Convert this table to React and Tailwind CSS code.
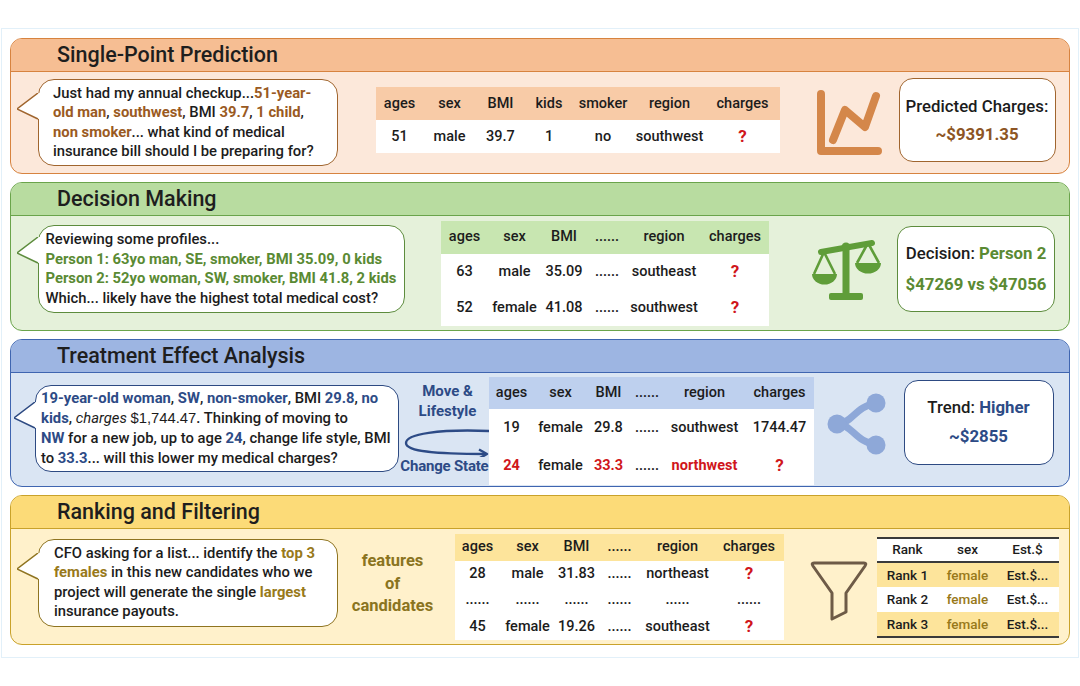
const Q = () => <span className="text-[#d0161b] font-bold text-[17px]">?</span>

function Tail({ pos, stroke }) {
  return (
    <svg className={`absolute left-[-22px] ${pos}`} width="25" height="28" viewBox="0 0 25 28">
      <polygon points="21,0 0,16 21,26 25,26 25,0" fill="#fff" />
      <polyline points="21,0 0,16 21,26" fill="none" stroke={stroke} strokeWidth="1.5" strokeLinejoin="round" />
    </svg>
  )
}

function Bubble({ className, stroke, tail, children }) {
  return (
    <div className={`relative shrink-0 bg-white rounded-[16px] border-[1.5px] flex flex-col justify-center text-[14.8px] font-medium leading-[19.5px] text-[#1c1c1c] whitespace-nowrap ${className}`}>
      <Tail pos={tail} stroke={stroke} />
      {children}
    </div>
  )
}

function Section({ title, frame, head, body, h, children }) {
  return (
    <div className={`shrink-0 rounded-[12px] border-[1.5px] overflow-hidden flex flex-col ${frame} ${body} ${h}`}>
      <div className={`h-[33px] shrink-0 border-b-[1.5px] pl-[46px] flex items-center text-[21.5px] font-medium text-[#1e1e1e] ${frame} ${head}`}>
        {title}
      </div>
      <div className="flex-1 flex items-start">{children}</div>
    </div>
  )
}

function DataTable({ className, widths, head, rows, headCls, rowCls }) {
  return (
    <div className={`shrink-0 flex flex-col text-[14.5px] font-medium text-[#1c1c1c] ${className}`}>
      <div className={`flex ${headCls}`}>
        {head.map((c, i) => (
          <div key={i} className={`${widths[i]} flex items-center justify-center`}>{c}</div>
        ))}
      </div>
      {rows.map((r, j) => (
        <div key={j} className={`flex bg-white ${rowCls}`}>
          {r.map((c, i) => (
            <div key={i} className={`${widths[i]} flex items-center justify-center`}>{c}</div>
          ))}
        </div>
      ))}
    </div>
  )
}

function ResultBox({ className, children }) {
  return (
    <div className={`shrink-0 bg-white rounded-[14px] border-[1.5px] flex flex-col items-center justify-center text-[16.8px] font-medium text-[#1c1c1c] whitespace-nowrap ${className}`}>
      {children}
    </div>
  )
}

function ChartIcon() {
  return (
    <svg width="66" height="66" viewBox="0 0 66 66" className="shrink-0 ml-[36px] mt-[18px]">
      <path d="M5 4 V61 H62" fill="none" stroke="#d4874a" strokeWidth="8" strokeLinecap="round" strokeLinejoin="round" />
      <polyline points="17,50 29,20 49,37 60,6" fill="none" stroke="#d4874a" strokeWidth="8" strokeLinecap="round" strokeLinejoin="round" />
    </svg>
  )
}

function ScalesIcon() {
  const c = '#5f9d39'
  return (
    <svg width="70" height="64" viewBox="0 0 70 64" className="shrink-0 ml-[43px] mt-[22px]">
      <line x1="9" y1="14" x2="60" y2="5" stroke={c} strokeWidth="6" strokeLinecap="round" />
      <circle cx="34" cy="9" r="4.5" fill={c} />
      <rect x="30.5" y="8" width="7" height="50" fill={c} />
      <rect x="17" y="55" width="34" height="7" rx="2" fill={c} />
      <polyline points="2,36 12,14 23,36" fill="none" stroke={c} strokeWidth="2.6" strokeLinejoin="round" />
      <path d="M0 36 H25 A12.5 10.5 0 0 1 0 36 Z" fill={c} />
      <polyline points="45,25 56,5 67,25" fill="none" stroke={c} strokeWidth="2.6" strokeLinejoin="round" />
      <path d="M43 25 H69 A13 10.5 0 0 1 43 25 Z" fill={c} />
    </svg>
  )
}

function ShareIcon() {
  const c = '#8ea8d8'
  return (
    <svg width="60" height="62" viewBox="0 0 60 62" className="shrink-0 ml-[13px] mt-[20px]">
      <path d="M11 31 C 24 31 30 12 48 11" fill="none" stroke={c} strokeWidth="7" strokeLinecap="round" />
      <path d="M11 31 C 24 31 30 50 48 51" fill="none" stroke={c} strokeWidth="7" strokeLinecap="round" />
      <circle cx="10" cy="31" r="9.5" fill={c} />
      <circle cx="49" cy="10" r="9.5" fill={c} />
      <circle cx="49" cy="52" r="9.5" fill={c} />
    </svg>
  )
}

function FunnelIcon() {
  return (
    <svg width="60" height="62" viewBox="0 0 60 62" className="shrink-0 ml-[25px] mt-[31px]">
      <path d="M5 3 H55 Q58 3 56 6 L37 33 V52 L23 59 V33 L4 6 Q2 3 5 3 Z" fill="none" stroke="#6e5b47" strokeWidth="3" strokeLinejoin="round" />
    </svg>
  )
}

const o = 'font-bold text-[#9a5a22]'
const g = 'font-bold text-[#5a8a33]'
const b = 'font-bold text-[#2d4b86]'
const y = 'font-bold text-[#98791a]'

export default function App() {
  return (
    <div className="w-[1080px] h-[686px] bg-white pt-[28px] font-['Roboto',sans-serif]">
      <div className="mx-[1px] h-[630px] border border-[#e2f0f9] px-[8px] pt-[9px] flex flex-col gap-[8px]">
        {/* Single-Point Prediction */}
        <Section title="Single-Point Prediction" frame="border-[#d7833f]" head="bg-[#f6be93]" body="bg-[#fce8da]" h="h-[136px]">
          <Bubble className="ml-[26.5px] mt-[7px] w-[300px] h-[87px] pl-[14.5px] border-[#a0652e]" stroke="#a0652e" tail="top-[13px]">
            <div>Just had my annual checkup...<span className={o}>51-year-</span></div>
            <div><span className={o}>old man</span>, <span className={o}>southwest</span>, BMI <span className={o}>39.7</span>, <span className={o}>1 child</span>,</div>
            <div><span className={o}>non smoker</span>... what kind of medical</div>
            <div>insurance bill should I be preparing for?</div>
          </Bubble>
          <DataTable
            className="ml-[38px] mt-[15px]"
            widths={['w-[48px]', 'w-[52px]', 'w-[50px]', 'w-[47px]', 'w-[61px]', 'w-[72px]', 'w-[74px]']}
            head={['ages', 'sex', 'BMI', 'kids', 'smoker', 'region', 'charges']}
            rows={[['51', 'male', '39.7', '1', 'no', 'southwest', <Q />]]}
            headCls="h-[33px] bg-[#f8cba7]"
            rowCls="h-[33px]"
          />
          <ChartIcon />
          <ResultBox className="ml-[17px] mt-[6px] w-[157px] h-[84px] border-[#a0652e] leading-[28px]">
            <div>Predicted Charges:</div>
            <div className="font-bold text-[#8d5524]">~$9391.35</div>
          </ResultBox>
        </Section>

        {/* Decision Making */}
        <Section title="Decision Making" frame="border-[#6aa44b]" head="bg-[#b8dca0]" body="bg-[#e5f1da]" h="h-[149px]">
          <Bubble className="ml-[27px] mt-[9px] w-[367px] h-[88px] pl-[6.5px] border-[#5d8c3d]" stroke="#5d8c3d" tail="top-[11px]">
            <div>Reviewing some profiles...</div>
            <div className={g}>Person 1: 63yo man, SE, smoker, BMI 35.09, 0 kids</div>
            <div className={g}>Person 2: 52yo woman, SW, smoker, BMI 41.8, 2 kids</div>
            <div>Which... likely have the highest total medical cost?</div>
          </Bubble>
          <DataTable
            className="ml-[36px] mt-[4.5px]"
            widths={['w-[47px]', 'w-[53px]', 'w-[46px]', 'w-[40px]', 'w-[74px]', 'w-[68px]']}
            head={['ages', 'sex', 'BMI', '......', 'region', 'charges']}
            rows={[
              ['63', 'male', '35.09', '......', 'southeast', <Q />],
              ['52', 'female', '41.08', '......', 'southwest', <Q />],
            ]}
            headCls="h-[33px] bg-[#c8e6b1]"
            rowCls="h-[36px]"
          />
          <ScalesIcon />
          <ResultBox className="ml-[15px] mt-[9.5px] w-[158px] h-[86px] border-[#5d8c3d] leading-[31px]">
            <div>Decision: <span className="font-bold text-[#5a8a33]">Person 2</span></div>
            <div className="font-bold text-[#5a8a33]">$47269 vs $47056</div>
          </ResultBox>
        </Section>

        {/* Treatment Effect Analysis */}
        <Section title="Treatment Effect Analysis" frame="border-[#3f65b0]" head="bg-[#9db5e2]" body="bg-[#dae5f3]" h="h-[148px]">
          <Bubble className="ml-[23.5px] mt-[11.5px] w-[364px] h-[87px] pl-[5.5px] border-[#2d4a82] leading-[20px]" stroke="#2d4a82" tail="top-[16px]">
            <div><span className={b}>19-year-old woman</span>, <span className={b}>SW</span>, <span className={b}>non-smoker</span>, BMI <span className={b}>29.8</span>, <span className={b}>no</span></div>
            <div><span className={b}>kids</span>, <span className="italic font-normal">charges</span> <span className="font-normal font-['Liberation_Sans',sans-serif]">$1,744.47</span>. Thinking of moving to</div>
            <div><span className={b}>NW</span> for a new job, up to age <span className={b}>24</span>, change life style, BMI</div>
            <div>to <span className={b}>33.3</span>... will this lower my medical charges?</div>
          </Bubble>
          <div className="shrink-0 w-[90px] mt-[9px] flex flex-col text-[15px] font-bold text-[#2d4b86] whitespace-nowrap">
            <div className="pl-[8px] text-center leading-[19.5px]">
              <div>Move &amp;</div>
              <div>Lifestyle</div>
            </div>
            <svg width="90" height="36" viewBox="0 0 90 36">
              <path d="M90 10 C 40 8 7 13 7 22 C 7 31 40 33 86 33" fill="none" stroke="#2d4b86" strokeWidth="2.4" />
              <polyline points="80,28.5 88,33 80,37.5" fill="none" stroke="#2d4b86" strokeWidth="2.4" strokeLinejoin="round" />
            </svg>
            <div className="text-right leading-[18px] tracking-[-0.2px]">Change State</div>
          </div>
          <DataTable
            className="mt-[4px]"
            widths={['w-[46px]', 'w-[52px]', 'w-[44px]', 'w-[33px]', 'w-[82px]', 'w-[68px]']}
            head={['ages', 'sex', 'BMI', '......', 'region', 'charges']}
            rows={[
              ['19', 'female', '29.8', '......', 'southwest', '1744.47'],
              [
                <span className="font-bold text-[#d0161b]">24</span>,
                'female',
                <span className="font-bold text-[#d0161b]">33.3</span>,
                '......',
                <span className="font-bold text-[#d0161b]">northwest</span>,
                <Q />,
              ],
            ]}
            headCls="h-[32px] bg-[#bed0ee]"
            rowCls="h-[38px]"
          />
          <ShareIcon />
          <ResultBox className="ml-[17px] mt-[6.5px] w-[150px] h-[85px] border-[#2d4a82] leading-[29px]">
            <div>Trend: <span className="font-bold text-[#2d4b86]">Higher</span></div>
            <div className="font-bold text-[#2d4b86]">~$2855</div>
          </ResultBox>
        </Section>

        {/* Ranking and Filtering */}
        <Section title="Ranking and Filtering" frame="border-[#c9a22a]" head="bg-[#fcdb78]" body="bg-[#fff1cb]" h="h-[150px]">
          <Bubble className="ml-[26.5px] mt-[9.5px] w-[300px] h-[88px] pl-[15.5px] border-[#8f7420]" stroke="#8f7420" tail="top-[13px]">
            <div>CFO asking for a list... identify the <span className={y}>top 3</span></div>
            <div><span className={y}>females</span> in this new candidates who we</div>
            <div>project will generate the single <span className={y}>largest</span></div>
            <div>insurance payouts.</div>
          </Bubble>
          <div className="shrink-0 w-[110px] mt-[21px] text-center text-[16.5px] font-bold leading-[22.5px] text-[#8a7420]">
            <div>features</div>
            <div>of</div>
            <div>candidates</div>
          </div>
          <DataTable
            className="ml-[7px] mt-[4.5px]"
            widths={['w-[46px]', 'w-[54px]', 'w-[44px]', 'w-[42px]', 'w-[74px]', 'w-[69px]']}
            head={['ages', 'sex', 'BMI', '......', 'region', 'charges']}
            rows={[
              ['28', 'male', '31.83', '......', 'northeast', <Q />],
              ['......', '......', '......', '......', '......', '......'],
              ['45', 'female', '19.26', '......', 'southeast', <Q />],
            ]}
            headCls="h-[27px] bg-[#fde49b]"
            rowCls="h-[26.5px]"
          />
          <FunnelIcon />
          <div className="shrink-0 ml-[8px] mt-[7.5px] w-[182px] border-y-2 border-[#3a3a3a] text-[13.5px] font-medium text-[#1c1c1c]">
            <div className="flex h-[24px] bg-white border-b-2 border-[#3a3a3a]">
              <div className="w-[62px] flex items-center justify-center">Rank</div>
              <div className="w-[58px] flex items-center justify-center">sex</div>
              <div className="w-[62px] flex items-center justify-center">Est.$</div>
            </div>
            {['Rank 1', 'Rank 2', 'Rank 3'].map((r, i) => (
              <div key={r} className={`flex h-[24.5px] ${i === 1 ? 'bg-white' : 'bg-[#fde49b]'}`}>
                <div className="w-[62px] flex items-center justify-center">{r}</div>
                <div className="w-[58px] flex items-center justify-center text-[#98791a]">female</div>
                <div className="w-[62px] flex items-center justify-center">Est.$...</div>
              </div>
            ))}
          </div>
        </Section>
      </div>
    </div>
  )
}
